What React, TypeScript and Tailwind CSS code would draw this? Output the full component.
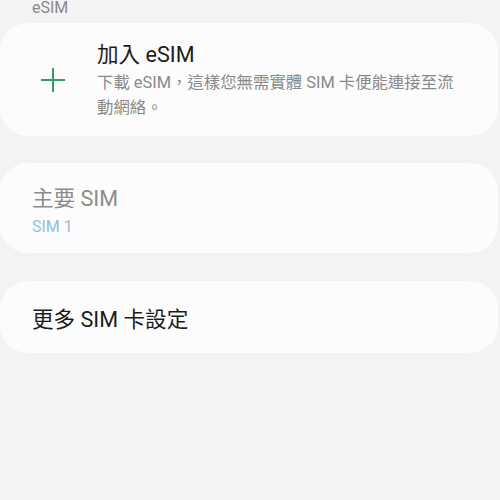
const font = { fontFamily: '"Roboto", "Noto Sans CJK TC", sans-serif' }

function PlusIcon() {
  return (
    <svg width="26" height="26" viewBox="0 0 26 26" fill="none">
      <path d="M13 1v24M1 13h24" stroke="#2f9e5e" strokeWidth="2" />
    </svg>
  )
}

export default function App() {
  return (
    <div className="h-[500px] w-[500px] overflow-hidden bg-[#f3f3f3]" style={font}>
      <div className="-mt-[1px] h-[24px] pl-[32px] text-[16px] leading-[18px] text-[#8a8a8a]">eSIM</div>

      <div className="mr-[2px] flex h-[113px] items-center rounded-[28px] bg-[#fcfcfc]">
        <div className="flex w-[97px] shrink-0 justify-center pl-[8px]">
          <PlusIcon />
        </div>
        <div className="pr-[30px] pt-[2px]">
          <div className="text-[21.6px] leading-[28px] text-[#1c1c1c]">加入 eSIM</div>
          <div className="mt-[1px] text-[16.4px] leading-[25px] text-[#8a8a8a]">
            下載 eSIM，這樣您無需實體 SIM 卡便能連接至流動網絡。
          </div>
        </div>
      </div>

      <div className="mr-[2px] mt-[27px] flex h-[90px] flex-col justify-center rounded-[28px] bg-[#fcfcfc] pl-[32px] pt-[6px]">
        <div className="text-[21.6px] leading-[28px] text-[#8c8c8c]">主要 SIM</div>
        <div className="mt-[4px] text-[16px] leading-[20px] text-[#92c0dc]">SIM 1</div>
      </div>

      <div className="mr-[2px] mt-[28px] flex h-[72px] items-center rounded-[28px] bg-[#fcfcfc] pl-[32px] pt-[5px]">
        <div className="text-[21.6px] leading-[28px] text-[#1c1c1c]">更多 SIM 卡設定</div>
      </div>
    </div>
  )
}
